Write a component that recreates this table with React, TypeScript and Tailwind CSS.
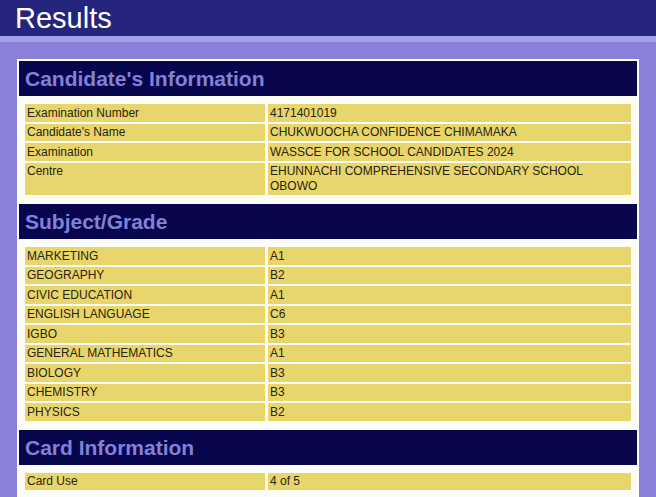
import React from "react";

const candidate = [
  { label: "Examination Number", value: "4171401019" },
  { label: "Candidate's Name", value: "CHUKWUOCHA CONFIDENCE CHIMAMAKA" },
  { label: "Examination", value: "WASSCE FOR SCHOOL CANDIDATES 2024" },
  { label: "Centre", value: "EHUNNACHI COMPREHENSIVE SECONDARY SCHOOL OBOWO" },
];

const grades = [
  { label: "MARKETING", value: "A1" },
  { label: "GEOGRAPHY", value: "B2" },
  { label: "CIVIC EDUCATION", value: "A1" },
  { label: "ENGLISH LANGUAGE", value: "C6" },
  { label: "IGBO", value: "B3" },
  { label: "GENERAL MATHEMATICS", value: "A1" },
  { label: "BIOLOGY", value: "B3" },
  { label: "CHEMISTRY", value: "B3" },
  { label: "PHYSICS", value: "B2" },
];

const card = [{ label: "Card Use", value: "4 of 5" }];

function Section({ title, rows }: { title: string; rows: { label: string; value: string }[] }) {
  return (
    <div>
      <div className="h-[35px] bg-[#07064c] flex items-center px-[6px]">
        <h2 className="text-[21px] font-bold text-[#8280d8] leading-none">{title}</h2>
      </div>
      <div className="px-[6px] pt-[8px] pb-[9px] flex flex-col gap-[2px]">
        {rows.map((r) => (
          <div key={r.label} className="grid grid-cols-[240px_1fr] gap-[3px] text-[12px] leading-[15px] text-[#2a2610]">
            <div className="bg-[#e8d56c] px-[2px] pt-[1.5px] pb-[1px] min-h-[17.5px]">{r.label}</div>
            <div className="bg-[#e8d56c] px-[2px] pt-[1.5px] pb-[1px] pr-[30px] min-h-[17.5px]">{r.value}</div>
          </div>
        ))}
      </div>
    </div>
  );
}

export default function App() {
  return (
    <div className="h-[497px] overflow-hidden bg-[#8a80da]" style={{ fontFamily: '"Liberation Sans", Arial, sans-serif' }}>
      <div className="h-[36px] bg-[#26257e] flex items-center px-[15px]">
        <h1 className="text-[29px] text-white leading-none">Results</h1>
      </div>
      <div className="h-[6px] bg-[#a69fe8]" />
      <div className="mx-[17px] mt-[17px] bg-[#fdfdf7] p-[2px] flex flex-col">
        <Section title="Candidate's Information" rows={candidate} />
        <Section title="Subject/Grade" rows={grades} />
        <Section title="Card Information" rows={card} />
      </div>
    </div>
  );
}
